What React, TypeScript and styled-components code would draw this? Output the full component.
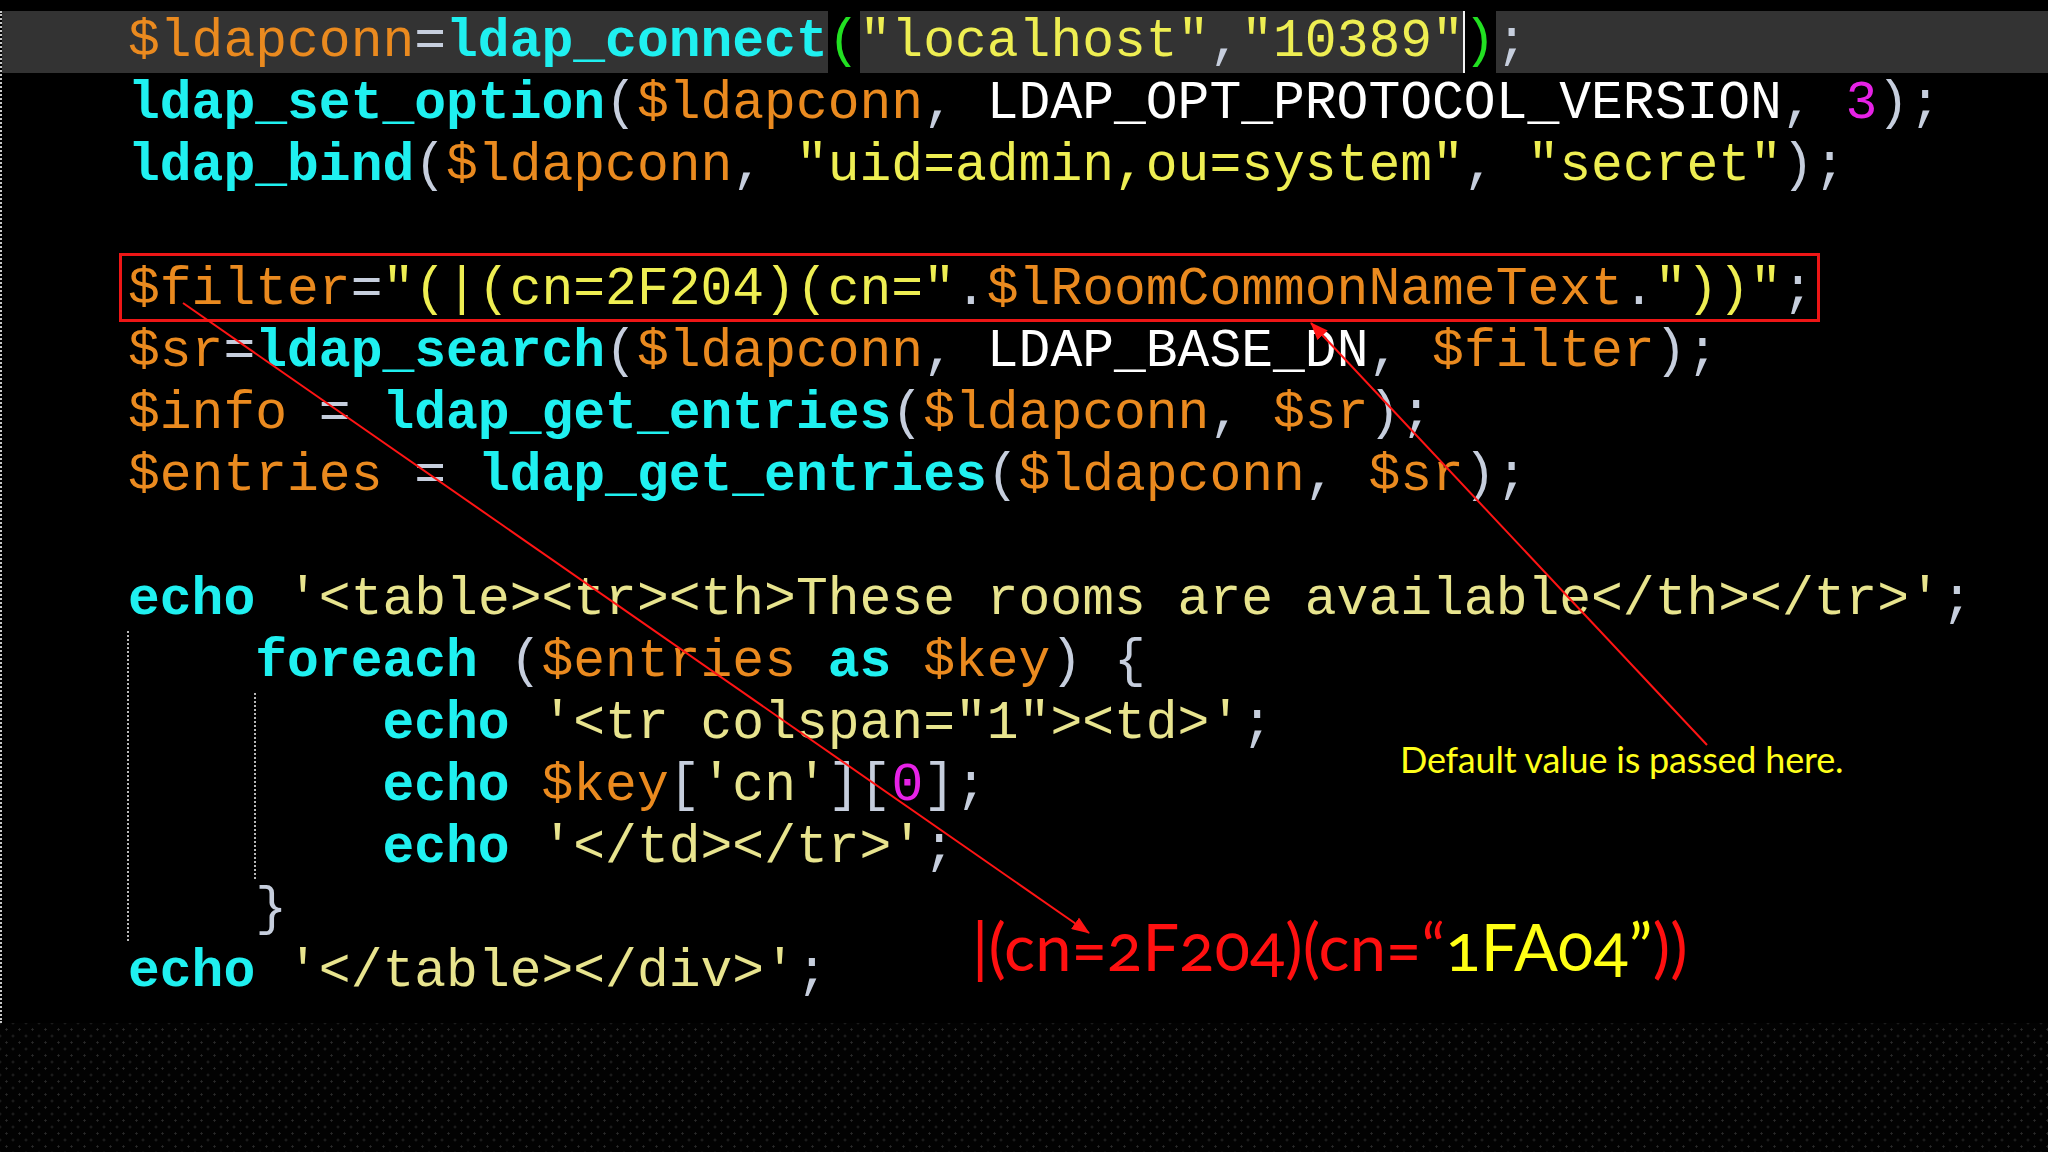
import styled, { createGlobalStyle } from "styled-components";

type Kind = "v" | "f" | "s" | "q" | "c" | "p" | "n" | "k" | "b" | "cur";
type Token = [Kind, string?];

const GlobalStyle = createGlobalStyle`
  html, body {
    margin: 0;
    padding: 0;
    background: #000;
  }
  #root {
    width: 2048px;
    height: 1152px;
  }
`;

const colors: Record<Kind, string> = {
  v: "#ea8a1f",
  f: "#1ff0f0",
  s: "#eeee52",
  q: "#e8e48e",
  c: "#ffffff",
  p: "#c6cedd",
  n: "#e622e6",
  k: "#1ff0f0",
  b: "#22e022",
  cur: "#ffffff",
};

const Slide = styled.div`
  position: relative;
  width: 2048px;
  height: 1152px;
  background: #000;
  overflow: hidden;
  display: flex;
  flex-direction: column;
  padding-top: 11px;
  box-sizing: border-box;
`;

const Editor = styled.div`
  flex: 0 0 1012px;
  border-left: 2px dotted #c4c4c4;
  font-family: "Liberation Mono", "Courier New", monospace;
  font-size: 53px;
`;

const DotGrid = styled.div`
  flex: 1;
  background-color: #020202;
  background-image: radial-gradient(circle, #2a2a2a 0.9px, transparent 1.3px),
    radial-gradient(circle, #2a2a2a 0.9px, transparent 1.3px);
  background-size: 13px 13px;
  background-position: 0 0, 6.5px 6.5px;
`;

const Line = styled.div<{ $active?: boolean }>`
  height: 62px;
  line-height: 62px;
  white-space: pre;
  padding-left: 126px;
  background: ${(p) => (p.$active ? "#333333" : "transparent")};
`;

const Tok = styled.span<{ $k: Kind }>`
  color: ${(p) => colors[p.$k]};
  font-weight: ${(p) => (p.$k === "f" || p.$k === "k" ? 700 : 400)};
  background: ${(p) => (p.$k === "b" ? "#000" : "transparent")};
  display: inline-block;
  height: 62px;
  vertical-align: top;
`;

const Cursor = styled.span`
  display: inline-block;
  width: 2px;
  height: 62px;
  margin: 0 -1px;
  vertical-align: top;
  background: #f4f4f4;
  position: relative;
  z-index: 1;
`;

const Block = styled.div<{ $col: number }>`
  position: relative;
  &::before {
    content: "";
    position: absolute;
    top: 0;
    bottom: 0;
    left: calc(125px + ${(p) => p.$col}ch);
    border-left: 2px dotted #b8b8b8;
  }
`;

const FilterBox = styled.div`
  position: absolute;
  left: 119px;
  top: 253px;
  width: 1701px;
  height: 69px;
  border: 3px solid #ee1616;
  box-sizing: border-box;
  pointer-events: none;
`;

const Arrows = styled.svg`
  position: absolute;
  inset: 0;
  pointer-events: none;
`;

const Note = styled.div`
  position: absolute;
  left: 1400px;
  top: 741px;
  font-family: Lato, "Open Sans", sans-serif;
  font-size: 36px;
  letter-spacing: -0.2px;
  line-height: 1;
  color: #ffff1a;
  white-space: nowrap;
`;

const Result = styled.div`
  position: absolute;
  left: 972px;
  top: 914px;
  font-family: Lato, "Open Sans", sans-serif;
  font-size: 65px;
  letter-spacing: 0.2px;
  line-height: 1;
  color: #ff1010;
  white-space: nowrap;
  font-variant-numeric: oldstyle-nums;
`;

const Value = styled.span`
  color: #ffff14;
`;

const lines: Token[][] = [
  [["v", "$ldapconn"], ["p", "="], ["f", "ldap_connect"], ["b", "("], ["s", '"localhost"'], ["p", ","], ["s", '"10389"'], ["cur"], ["b", ")"], ["p", ";"]],
  [["f", "ldap_set_option"], ["p", "("], ["v", "$ldapconn"], ["p", ", "], ["c", "LDAP_OPT_PROTOCOL_VERSION"], ["p", ", "], ["n", "3"], ["p", ");"]],
  [["f", "ldap_bind"], ["p", "("], ["v", "$ldapconn"], ["p", ", "], ["s", '"uid=admin,ou=system"'], ["p", ", "], ["s", '"secret"'], ["p", ");"]],
  [],
  [["v", "$filter"], ["p", "="], ["s", '"(|(cn=2F204)(cn="'], ["p", "."], ["v", "$lRoomCommonNameText"], ["p", "."], ["s", '"))"'], ["p", ";"]],
  [["v", "$sr"], ["p", "="], ["f", "ldap_search"], ["p", "("], ["v", "$ldapconn"], ["p", ", "], ["c", "LDAP_BASE_DN"], ["p", ", "], ["v", "$filter"], ["p", ");"]],
  [["v", "$info"], ["p", " = "], ["f", "ldap_get_entries"], ["p", "("], ["v", "$ldapconn"], ["p", ", "], ["v", "$sr"], ["p", ");"]],
  [["v", "$entries"], ["p", " = "], ["f", "ldap_get_entries"], ["p", "("], ["v", "$ldapconn"], ["p", ", "], ["v", "$sr"], ["p", ");"]],
  [],
  [["k", "echo"], ["p", " "], ["q", "'<table><tr><th>These rooms are available</th></tr>'"], ["p", ";"]],
];

const loopHead: Token[] = [["p", "    "], ["k", "foreach"], ["p", " ("], ["v", "$entries"], ["p", " "], ["k", "as"], ["p", " "], ["v", "$key"], ["p", ") {"]];

const loopBody: Token[][] = [
  [["p", "        "], ["k", "echo"], ["p", " "], ["q", "'<tr colspan=\"1\"><td>'"], ["p", ";"]],
  [["p", "        "], ["k", "echo"], ["p", " "], ["v", "$key"], ["p", "["], ["q", "'cn'"], ["p", "]["], ["n", "0"], ["p", "];"]],
  [["p", "        "], ["k", "echo"], ["p", " "], ["q", "'</td></tr>'"], ["p", ";"]],
];

const loopEnd: Token[] = [["p", "    }"]];
const lastLine: Token[] = [["k", "echo"], ["p", " "], ["q", "'</table></div>'"], ["p", ";"]];

function CodeLine({ tokens, active }: { tokens: Token[]; active?: boolean }) {
  return (
    <Line $active={active}>
      {tokens.length === 0 && " "}
      {tokens.map(([k, text], i) =>
        k === "cur" ? <Cursor key={i} /> : (
          <Tok key={i} $k={k}>
            {text}
          </Tok>
        )
      )}
    </Line>
  );
}

export default function App() {
  return (
    <>
      <GlobalStyle />
      <Slide>
        <Editor>
          {lines.map((t, i) => (
            <CodeLine key={i} tokens={t} active={i === 0} />
          ))}
          <Block $col={0}>
            <CodeLine tokens={loopHead} />
            <Block $col={4}>
              {loopBody.map((t, i) => (
                <CodeLine key={i} tokens={t} />
              ))}
            </Block>
            <CodeLine tokens={loopEnd} />
          </Block>
          <CodeLine tokens={lastLine} />
        </Editor>
        <DotGrid />

        <FilterBox />
        <Arrows width="2048" height="1152" viewBox="0 0 2048 1152">
          <defs>
            <marker
              id="head"
              markerUnits="userSpaceOnUse"
              markerWidth="18"
              markerHeight="14"
              refX="17"
              refY="7"
              orient="auto"
              viewBox="0 0 18 14"
            >
              <path d="M0,0 L18,7 L0,14 z" fill="#ff1414" />
            </marker>
          </defs>
          <line x1="183" y1="303" x2="1089" y2="933" stroke="#ff1414" strokeWidth="2" markerEnd="url(#head)" />
          <line x1="1707" y1="745" x2="1311" y2="323" stroke="#ff1414" strokeWidth="2" markerEnd="url(#head)" />
        </Arrows>
        <Note>Default value is passed here.</Note>
        <Result>
          |(cn=2F204)(cn=“<Value>1FA04”</Value>))
        </Result>
      </Slide>
    </>
  );
}
